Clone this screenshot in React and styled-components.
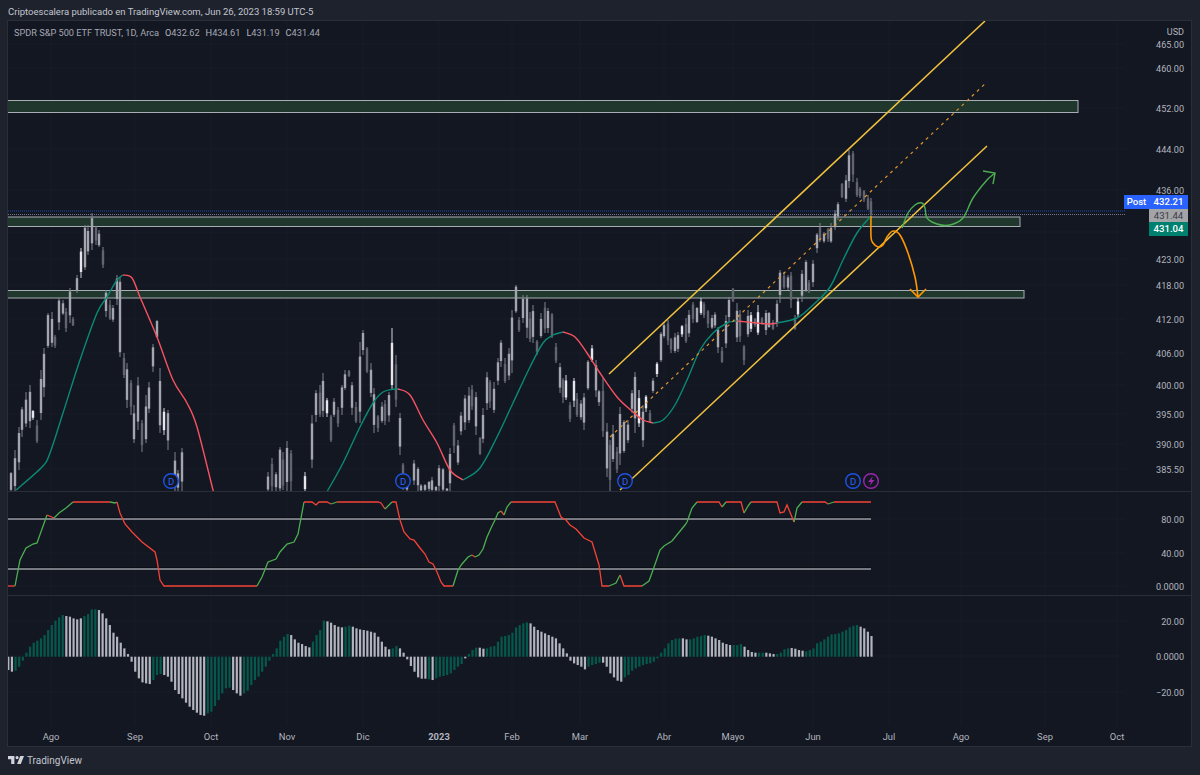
import React from 'react'
import styled, { createGlobalStyle } from 'styled-components'

const GlobalStyle = createGlobalStyle`
  html, body { margin: 0; padding: 0; background: #1e222d; }
  body { font-family: Roboto, "Liberation Sans", sans-serif; }
`

const Page = styled.div`
  width: 1200px;
  height: 775px;
  padding: 0 8px 0 7px;
  box-sizing: border-box;
  background: #1e222d;
  display: flex;
  flex-direction: column;
  overflow: hidden;
`
const Caption = styled.div`
  height: 20px;
  line-height: 23px;
  font-size: 9.5px;
  padding-left: 1px;
  color: #c3c6ce;
  white-space: nowrap;
`
const ChartFrame = styled.div`
  border: 1px solid #2a2e39;
  background: #131722;
  display: flex;
  flex-direction: column;
  height: 727px;
  box-sizing: border-box;
`
const Pane = styled.div`
  position: relative;
  box-sizing: border-box;
  height: ${p => p.$h}px;
  display: grid;
  grid-template-columns: 1117px 1fr;
  border-bottom: ${p => (p.$last ? 'none' : '1px solid #2a2e39')};
  flex: none;
`
const Plot = styled.svg`
  display: block;
  width: 1117px;
  height: ${p => p.$h}px;
`
const Axis = styled.div`
  position: relative;
`
const Tick = styled.span`
  position: absolute;
  right: 7px;
  margin-top: 1px;
  transform: translateY(-50%);
  font-size: 9.1px;
  color: #b2b5be;
  line-height: 12px;
`
const Legend = styled.div`
  position: absolute;
  left: 6px;
  top: 5px;
  display: flex;
  gap: 6px;
  font-size: 9.2px;
  line-height: 13px;
  color: #a5a8b2;
  white-space: nowrap;
  b { font-weight: 400; color: #b2b5be; }
`
const Tags = styled.div`
  position: absolute;
  left: -1px;
  top: 174px;
  width: 64px;
  display: grid;
  grid-template-columns: 25px 39px;
  grid-auto-rows: 13.5px;
`
const Tag = styled.span`
  grid-column: ${p => p.$col};
  background: ${p => p.$bg};
  color: ${p => p.$fg};
  font-size: 9.6px;
  font-weight: ${p => p.$weight || 500};
  line-height: 13.5px;
  text-align: center;
`
const TimeAxis = styled.div`
  position: relative;
  height: 21px;
  flex: none;
`
const TimeLabel = styled.span`
  position: absolute;
  top: 5px;
  transform: translateX(-50%);
  font-size: 9.4px;
  line-height: 13px;
  color: #b2b5be;
  font-weight: ${p => (p.$bold ? 700 : 400)};
`
const Footer = styled.div`
  display: flex;
  align-items: center;
  gap: 3px;
  height: 28px;
  padding-left: 1px;
  padding-bottom: 2px;
  box-sizing: border-box;
`
const BrandName = styled.span`
  font-size: 10px;
  color: #c3c6ce;
`

const PRICE_TICKS = [
  ['465.00', 44], ['460.00', 68], ['452.00', 108], ['444.00', 149], ['436.00', 190], ['428.00', 232],
  ['423.00', 259], ['418.00', 285], ['412.00', 319], ['406.00', 353], ['400.00', 385], ['395.00', 414],
  ['390.00', 444], ['385.50', 469],
]
const OSC_TICKS = [['80.00', 519], ['40.00', 553], ['0.0000', 586]]
const MACD_TICKS = [['20.00', 621], ['0.0000', 656], ['−20.00', 692]]
const MONTHS = [
  ['Ago', 51], ['Sep', 135], ['Oct', 211], ['Nov', 287], ['Dic', 363], ['2023', 439, true], ['Feb', 512],
  ['Mar', 580], ['Abr', 664], ['Mayo', 733], ['Jun', 813], ['Jul', 889], ['Ago', 961], ['Sep', 1045], ['Oct', 1117],
]

// x, wick top, wick bottom, optional w = white body / d = dark body
const CANDLES = [
  [11,472,491],[15,450,491],[19,427,470],[22,407,437],[26,392,427],[30,385,428],[33,410,420,'w'],[37,420,443,'d'],
  [41,370,420],[44,348,397],[48,313,348],[52,312,347],[55,335,348,'d'],[59,298,330],[63,300,315],[66,308,332,'d'],
  [70,288,323],[73,317,326,'d'],[77,275,293],[81,248,278,'w'],[85,225,270],[88,225,255],[92,213,250],[96,226,245,'d'],
  [99,230,247],[103,247,268,'d'],[106,290,317],[110,300,320,'d'],[113,305,322],[117,275,305],[120,277,357],[124,353,378,'d'],
  [127,363,408],[131,380,415,'d'],[134,405,443],[138,377,430],[142,420,452,'d'],[146,395,443],[149,382,413],[153,344,372],
  [157,320,338],[160,368,433],[164,408,435,'w'],[168,410,450],[175,452,491],[178,470,491],[182,448,491],
  [268,472,491],[272,458,491,'d'],[276,472,491],[280,447,491],[283,452,490,'d'],[287,441,491],[291,450,491,'d'],
  [305,472,491,'w'],[312,415,468],[316,390,422],[320,385,417,'d'],[323,373,417],[327,398,417,'w'],[331,415,442,'d'],
  [334,398,417],[338,407,427,'d'],[342,385,415],[345,370,390],[349,370,377,'d'],[352,382,415],[356,402,423,'d'],
  [360,342,423],[363,330,355],[367,347,373,'d'],[371,363,397],[374,388,433],[378,415,432,'d'],[382,402,423],[385,400,425,'d'],
  [389,392,422],[392,328,390,'w'],[396,355,407,'d'],[400,413,455],[403,463,490,'d'],[407,478,491],[414,460,485],[418,467,491],
  [421,484,491],[425,484,491],[429,481,491],[432,477,491],[436,486,491],[439,465,491],[443,468,491],[447,488,491],
  [450,448,491],[454,423,453,'d'],[458,440,465],[461,412,435],[465,395,430],[469,387,423],[472,385,410,'d'],[476,392,435],
  [480,437,455,'d'],[483,408,443],[487,372,410],[490,380,408,'d'],[494,382,413],[498,358,385],[501,340,367],[505,358,383,'d'],
  [509,348,380],[512,310,373],[516,285,313],[519,317,332,'d'],[523,295,323],[527,295,338],[530,312,342,'d'],[533,305,343],
  [537,340,355,'d'],[541,313,338],[545,302,333,'d'],[548,308,333],[552,313,338,'d'],[556,343,363,'d'],[560,363,393],
  [563,378,403,'d'],[566,375,400,'w'],[570,402,422,'d'],[574,378,407,'w'],[577,393,417,'d'],[581,400,420],[584,393,430],
  [588,360,390],[592,345,362,'w'],[596,360,397],[599,390,406],[603,378,437,'d'],[607,423,477],[610,440,491,'d'],[613,425,462],
  [617,447,473,'d'],[620,407,465],[624,420,453],[628,420,443],[632,390,413],[635,372,433],[639,390,427,'w'],[643,405,447],
  [646,395,412,'w'],[650,410,423,'d'],[653,378,393],[657,362,377,'w'],[661,332,362],[664,322,338],[668,320,345,'d'],
  [671,338,353,'d'],[675,333,353],[678,332,352],[682,325,337,'w'],[686,318,343,'d'],[689,310,337],[693,302,323,'d'],
  [697,307,323],[701,298,315,'w'],[704,302,318,'d'],[708,310,328,'d'],[712,315,329],[715,312,328],[718,327,353],[722,347,363,'d'],
  [726,315,348],[729,297,322],[733,288,302,'d'],[737,303,342],[740,310,342,'d'],[744,345,365,'d'],[748,310,337],[751,312,332,'w'],
  [755,318,327,'d'],[758,305,335,'w'],[762,317,325,'d'],[766,310,335],[769,312,328],[773,320,330,'d'],[777,300,327],[780,270,303],
  [784,272,289,'d'],[788,275,290],[791,272,308,'d'],[795,315,330,'d'],[798,298,317,'w'],[802,270,302],[806,260,292],[809,280,293,'d'],
  [813,260,287],[817,233,253],[820,223,242,'d'],[824,232,243],[828,228,242,'d'],[831,223,243],[835,210,230],[838,202,220],
  [842,183,198,'d'],[846,175,202],[849,150,188],[853,151,182,'d'],[857,178,197,'d'],[860,187,198,'d'],[864,190,202,'d'],
  [868,195,210,'d'],[871,198,217,'d'],
]

const TEAL = '#0a8a76'
const RED = '#f7525f'
const MA = [
  [TEAL, [[16,490],[42,467],[50,453],[63,413],[80,360],[97,313],[107,297],[117,280],[123,275]]],
  [RED, [[123,275],[132,278],[140,297],[157,337],[173,380],[187,403],[197,427],[213,490],[216,500]]],
  [TEAL, [[322,500],[328,490],[343,463],[360,427],[373,403],[383,392],[395,389],[398,389]]],
  [RED, [[398,389],[410,395],[423,420],[437,443],[450,470],[463,480]]],
  [TEAL, [[463,480],[480,468],[497,437],[513,403],[530,367],[543,343],[553,335],[563,332]]],
  [RED, [[563,332],[575,337],[587,353],[600,373],[617,397],[633,412],[643,420],[653,423]]],
  [TEAL, [[653,423],[663,420],[675,405],[687,380],[700,350],[713,333],[727,323],[737,321]]],
  [RED, [[737,321],[757,323],[770,324],[777,323]]],
  [TEAL, [[777,323],[797,318],[813,305],[830,287],[843,260],[857,233],[871,216]]],
]

const ORANGE_PATH = [[871,216],[871,237],[873,243],[878,247],[883,245],[887,237],[893,231],[900,235],[908,253],[915,277],[918,297]]
const GREEN_PATH = [[902,228],[908,213],[915,205],[922,203],[925,208],[927,218],[937,224],[950,225],[963,218],[973,198],[987,180],[995,173]]

const OSC = [
  ['r', '7,586 15,586'],
  ['g', '15,586 20,560 26,548 33,544 37,543 47,515'],
  ['r', '47,515 54,518'],
  ['g', '54,518 59,513 66,508 73,502'],
  ['r', '73,502 110,502'],
  ['g', '110,502 115,503 117,502'],
  ['r', '117,502 120,513 125,524 132,532 142,542 155,552 157,560 160,580 164,586 257,586'],
  ['g', '257,586 262,577 268,562 276,559 280,552 287,544 294,542 298,534 304,502'],
  ['r', '304,502 312,502 316,505 319,502 327,502 331,504'],
  ['g', '331,504 337,502'],
  ['r', '337,502 378,502 381,503 385,509'],
  ['g', '385,509 392,502'],
  ['r', '392,502 396,502 400,520 404,532 410,539 414,540 420,548 425,554 429,562 433,564 437,572 441,582 444,586 453,586'],
  ['g', '453,586 458,570 462,564 468,557 472,555'],
  ['r', '472,555 475,557'],
  ['g', '475,557 479,555 483,549 487,537 492,526 495,520 498,513 501,511'],
  ['r', '501,511 504,515'],
  ['g', '504,515 507,507 511,502'],
  ['r', '511,502 555,502 561,517 566,520 570,525 576,529 584,538 588,540 592,542 596,555 599,565 602,586 609,586'],
  ['g', '609,586 616,583 620,575'],
  ['r', '620,575 624,586 642,586'],
  ['g', '642,586 649,581 653,570 660,550 664,546 672,541 685,525 687,522 692,508 697,502'],
  ['r', '697,502 719,502 722,507'],
  ['g', '722,507 726,502'],
  ['r', '726,502 741,502 744,513'],
  ['g', '744,513 748,506 751,502'],
  ['r', '751,502 777,502 780,513 784,512 787,505 794,522'],
  ['g', '794,522 797,508 802,502'],
  ['r', '802,502 825,502 828,504'],
  ['g', '828,504 834,502'],
  ['r', '834,502 871,502'],
]

// histogram values in thirds of a pixel, s = silver, g = green
const HIST = `s-40 s-45 g-42 g-30 g-12 g12 g30 g42 g48 g55 g65 g80 g95 g108 g118 g125 s122 s120 s115 s112 s115 g122 g128 g142 g142
s140 s130 s115 s95 s72 s60 s42 s25 s8 s-15 s-45 s-65 s-77 s-80 s-82 g-70 g-55 g-52 s-55 s-60 s-75 s-100 s-112 s-125 s-138 s-150
s-160 s-168 s-175 s-177 g-170 g-165 g-148 g-130 g-110 g-95 g-93 s-100 s-110 s-117 g-110 g-102 g-85 g-70 g-60 g-45 g-30 g-12 g8
g25 g48 g60 g68 s65 s52 s42 s38 s32 s28 g45 g65 g80 g108 s106 s102 s95 s90 s88 g90 g93 s90 s85 s82 s80 s78 s75 s72 s60 s45 s30
s22 g25 g32 s25 s12 s-8 s-28 s-45 s-62 s-66 s-66 g-68 s-70 g-65 g-60 g-58 g-55 g-50 g-40 g-30 g-22 s-5 g8 g20 g27 s27 s24 g25 g30
g32 g45 g60 g62 g65 g72 g88 g95 g100 g103 s100 s90 s80 s75 s70 s65 s60 s55 s40 s25 s10 s-12 s-20 s-25 s-30 s-38 g-30 g-25 g-22
g-18 s-18 s-30 s-50 s-62 s-72 s-75 g-62 g-55 g-42 g-35 g-30 g-25 g-22 g-20 g-15 g-5 g12 g25 g40 g50 g54 g55 s55 s52 g52 g55 g60
g62 g65 s63 s60 s55 s50 s42 s38 s35 g35 g35 g38 s30 s20 s14 s12 g12 g12 s12 s10 s8 g8 g12 g22 g25 s26 s24 s20 s18 g16 g20 g25 g40
g45 g52 g60 g67 g68 g70 g75 g80 g88 g93 g95 s90 s85 s75 s62`.split(/\s+/)

// Catmull-Rom through the traced points, for the smooth lines
function smooth(pts) {
  let d = `M${pts[0][0]} ${pts[0][1]}`
  for (let i = 0; i < pts.length - 1; i++) {
    const p0 = pts[i - 1] || pts[i]
    const p1 = pts[i]
    const p2 = pts[i + 1]
    const p3 = pts[i + 2] || p2
    const c1 = [p1[0] + (p2[0] - p0[0]) / 6, p1[1] + (p2[1] - p0[1]) / 6]
    const c2 = [p2[0] - (p3[0] - p1[0]) / 6, p2[1] - (p3[1] - p1[1]) / 6]
    d += ` C${c1[0].toFixed(1)} ${c1[1].toFixed(1)} ${c2[0].toFixed(1)} ${c2[1].toFixed(1)} ${p2[0]} ${p2[1]}`
  }
  return d
}

function Candle({ x, top, bottom, kind, index }) {
  const h = bottom - top
  const a = ((index * 37) % 10) / 10
  const b = ((index * 53) % 10) / 10
  const bodyTop = top + h * (0.06 + a * 0.2)
  const bodyBottom = bottom - h * (0.06 + b * 0.2)
  const fill = kind === 'w' ? '#e4e6eb' : kind === 'd' ? '#62656f' : '#a3a6af'
  const wick = kind === 'w' ? '#d1d4dc' : '#80838e'
  return (
    <g>
      <line x1={x} x2={x} y1={top} y2={bottom} stroke={wick} strokeWidth="1" />
      <rect x={x - 1.2} y={bodyTop} width="2.4" height={bodyBottom - bodyTop} fill={fill} />
    </g>
  )
}

function Zone({ x2, y1, y2 }) {
  return <rect x="6" y={y1} width={x2 - 6} height={y2 - y1} fill="#20372e" stroke="#a9adb4" strokeWidth="1" />
}

function Badge({ x, color, children }) {
  return (
    <g>
      <circle cx={x} cy="481" r="7.3" fill="#131722" stroke={color} strokeWidth="1.4" />
      {children}
    </g>
  )
}

function GridLines({ ticks, y1, y2 }) {
  return (
    <g stroke="#191d28" strokeWidth="1">
      {MONTHS.map(([m, x]) => <line key={m + x} x1={x} x2={x} y1={y1} y2={y2} />)}
      {ticks.map(([t, y]) => <line key={t} x1="8" x2="1125" y1={y} y2={y} />)}
    </g>
  )
}

function AxisTicks({ ticks, top }) {
  return ticks.map(([t, y]) => <Tick key={t} style={{ top: y - top }}>{t}</Tick>)
}

function MainPane() {
  return (
    <Pane $h={471}>
      <Plot $h={470} viewBox="8 21 1117 470">
        <GridLines ticks={PRICE_TICKS} y1={21} y2={491} />
        <Zone x2={1078} y1={100.5} y2={112.5} />
        <Zone x2={1020} y1={217} y2={226.5} />
        <Zone x2={1024} y1={290.5} y2={298} />
        <line x1="8" x2="1125" y1="211" y2="211" stroke="#2456d8" strokeWidth="0.8" strokeDasharray="1 1" />
        <line x1="8" x2="1125" y1="214.5" y2="214.5" stroke="#8f929b" strokeWidth="0.8" strokeDasharray="1 1" />
        {CANDLES.map(([x, top, bottom, kind], i) => (
          <Candle key={x} x={x} top={top} bottom={bottom} kind={kind} index={i} />
        ))}
        {MA.map(([color, pts], i) => (
          <path key={i} d={smooth(pts)} fill="none" stroke={color} strokeWidth="1.4" />
        ))}
        <line x1="609" y1="374" x2="985" y2="21" stroke="#f2c23e" strokeWidth="1.5" />
        <line x1="620" y1="490" x2="987" y2="146" stroke="#f2c23e" strokeWidth="1.5" />
        <line x1="610" y1="437" x2="987" y2="82" stroke="#e0962e" strokeWidth="1.2" strokeDasharray="3 4" />
        <path d={smooth(ORANGE_PATH)} fill="none" stroke="#ff9800" strokeWidth="1.6" />
        <path d="M910 289 L918 297 L926 289" fill="none" stroke="#ff9800" strokeWidth="1.6" />
        <path d={smooth(GREEN_PATH)} fill="none" stroke="#4caf50" strokeWidth="1.4" />
        <path d="M983 171 L995 173 L993 184" fill="none" stroke="#4caf50" strokeWidth="1.4" />
        {[171, 403, 625, 853].map(x => (
          <Badge key={x} x={x} color="#1e53e5">
            <text x={x} y="484.5" textAnchor="middle" fontSize="9.5" fontFamily="Roboto, sans-serif" fill="#2962ff">D</text>
          </Badge>
        ))}
        <Badge x={871} color="#9c27b0">
          <path d="M873 476 L868 482 L871 482 L869.5 486 L874.5 480 L871.5 480 Z" fill="#9c27b0" />
        </Badge>
      </Plot>
      <Axis>
        <Tick style={{ top: 10 }}>USD</Tick>
        <AxisTicks ticks={PRICE_TICKS} top={21} />
        <Tags>
          <Tag $col="1" $bg="#2962ff" $fg="#fff">Post</Tag>
          <Tag $col="2" $bg="#2962ff" $fg="#fff">432.21</Tag>
          <Tag $col="2" $bg="#a3a4a8" $fg="#3a3d46" $weight={400}>431.44</Tag>
          <Tag $col="2" $bg="#00806e" $fg="#fff">431.04</Tag>
        </Tags>
      </Axis>
      <Legend>
        <span>SPDR S&amp;P 500 ETF TRUST, 1D, Arca</span>
        <span><b>O</b>432.62</span>
        <span><b>H</b>434.61</span>
        <span><b>L</b>431.19</span>
        <span><b>C</b>431.44</span>
      </Legend>
    </Pane>
  )
}

function OscPane() {
  return (
    <Pane $h={104}>
      <Plot $h={103} viewBox="8 492 1117 103">
        <GridLines ticks={OSC_TICKS} y1={492} y2={595} />
        <line x1="8" x2="871" y1="518" y2="518" stroke="#050608" strokeWidth="1" />
        <line x1="8" x2="871" y1="519" y2="519" stroke="#9a9ca3" strokeWidth="1.4" />
        <line x1="8" x2="871" y1="568" y2="568" stroke="#050608" strokeWidth="1" />
        <line x1="8" x2="871" y1="569" y2="569" stroke="#9a9ca3" strokeWidth="1.4" />
        {OSC.map(([c, s], i) => (
          <polyline key={i} points={s} fill="none" stroke={c === 'r' ? '#f44336' : '#4caf50'} strokeWidth="1.3" />
        ))}
      </Plot>
      <Axis><AxisTicks ticks={OSC_TICKS} top={492} /></Axis>
    </Pane>
  )
}

function MacdPane() {
  const step = (871.5 - 8.3) / (HIST.length - 1)
  return (
    <Pane $h={129} $last>
      <Plot $h={129} viewBox="8 596 1117 129">
        <GridLines ticks={MACD_TICKS} y1={596} y2={725} />
        {HIST.map((v, i) => {
          const h = Number(v.slice(1)) / 3
          return (
            <rect
              key={i}
              x={8.3 + i * step - 1.1}
              y={h >= 0 ? 656.7 - h : 656.7}
              width="2.2"
              height={Math.abs(h)}
              fill={v[0] === 's' ? '#b2b5be' : '#05594c'}
            />
          )
        })}
      </Plot>
      <Axis><AxisTicks ticks={MACD_TICKS} top={596} /></Axis>
    </Pane>
  )
}

export default function App() {
  return (
    <Page>
      <GlobalStyle />
      <Caption>Criptoescalera publicado en TradingView.com, Jun 26, 2023 18:59 UTC-5</Caption>
      <ChartFrame>
        <MainPane />
        <OscPane />
        <MacdPane />
        <TimeAxis>
          {MONTHS.map(([m, x, bold]) => (
            <TimeLabel key={m + x} $bold={bold} style={{ left: x - 8 }}>{m}</TimeLabel>
          ))}
        </TimeAxis>
      </ChartFrame>
      <Footer>
        <svg width="16" height="8" viewBox="2 6 30 15">
          <path fill="#d1d4dc" d="M14 6H2v6h6v9h6V6Zm12 15h-7l6-15h7l-6 15Zm-7-9a3 3 0 1 0 0-6 3 3 0 0 0 0 6Z" />
        </svg>
        <BrandName>TradingView</BrandName>
      </Footer>
    </Page>
  )
}
